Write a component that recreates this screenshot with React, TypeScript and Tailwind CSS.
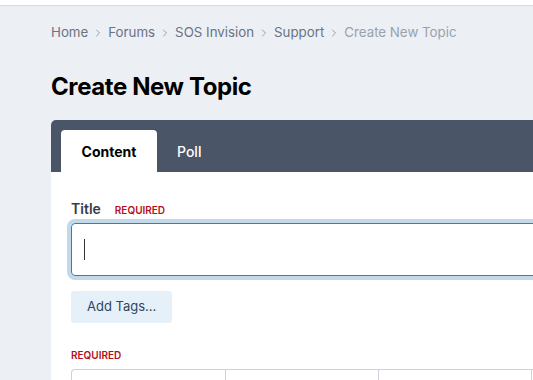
import { ChevronRight } from "lucide-react";

const crumbs = ["Home", "Forums", "SOS Invision", "Support"];

export default function App() {
  return (
    <div className="min-h-screen overflow-hidden bg-[#eceff4] font-['Inter',sans-serif]">
      <div className="h-[5px] bg-white shadow-[0_1px_1px_rgba(0,0,0,0.08)]" />

      <div className="pl-[51px] pt-[18px]">
        <nav className="flex items-center text-[13.3px] text-[#6b7384]">
          {crumbs.map((c) => (
            <span key={c} className="flex items-center">
              <span>{c}</span>
              <ChevronRight className="mx-[4px] h-3 w-3 text-[#9aa1ad]" strokeWidth={2} />
            </span>
          ))}
          <span className="text-[#9aa1ad]">Create New Topic</span>
        </nav>

        <h1 className="mt-[29px] text-[24px] font-bold leading-[30px] tracking-[-0.4px] text-black">
          Create New Topic
        </h1>

        <div className="mt-[18px] w-[520px] overflow-hidden rounded-tl-[5px] bg-white">
          <div className="flex h-[52px] items-end bg-[#4a5568] pl-[10px]">
            <div className="flex h-[42px] w-[96px] items-center justify-center rounded-t-[4px] bg-white pt-[2px] text-[14px] font-bold text-black">
              Content
            </div>
            <div className="flex h-[42px] items-center px-[20px] pt-[2px] text-[14px] font-medium text-white">
              Poll
            </div>
          </div>

          <div className="px-[20px] pt-[26px]">
            <div className="flex items-baseline gap-[14px]">
              <span className="text-[14px] font-semibold text-[#353c48]">Title</span>
              <span className="text-[10px] font-semibold text-[#b5101a]">REQUIRED</span>
            </div>
            <div className="mt-[4px] flex h-[53px] items-center rounded-[4px] border border-[#3d7bb5] pl-[12px] ring-4 ring-[#c2d9ea]">
              <span className="h-[21px] w-px bg-[#333]" />
            </div>

            <button className="mt-[15px] h-[32px] rounded-[3px] bg-[#e6f0f9] px-[16px] text-[13px] text-[#2d4661]">
              Add Tags...
            </button>

            <div className="mt-[25px] text-[10px] font-semibold text-[#b5101a]">REQUIRED</div>
            <div className="mt-[6px] flex h-[20px] rounded-t-[4px] border border-b-0 border-[#cfd0dc]">
              <div className="w-[154px] border-r border-[#cfd0dc]" />
              <div className="w-[153px] border-r border-[#cfd0dc]" />
              <div className="w-[153px] border-r border-[#cfd0dc]" />
            </div>
          </div>
        </div>
      </div>
    </div>
  );
}
